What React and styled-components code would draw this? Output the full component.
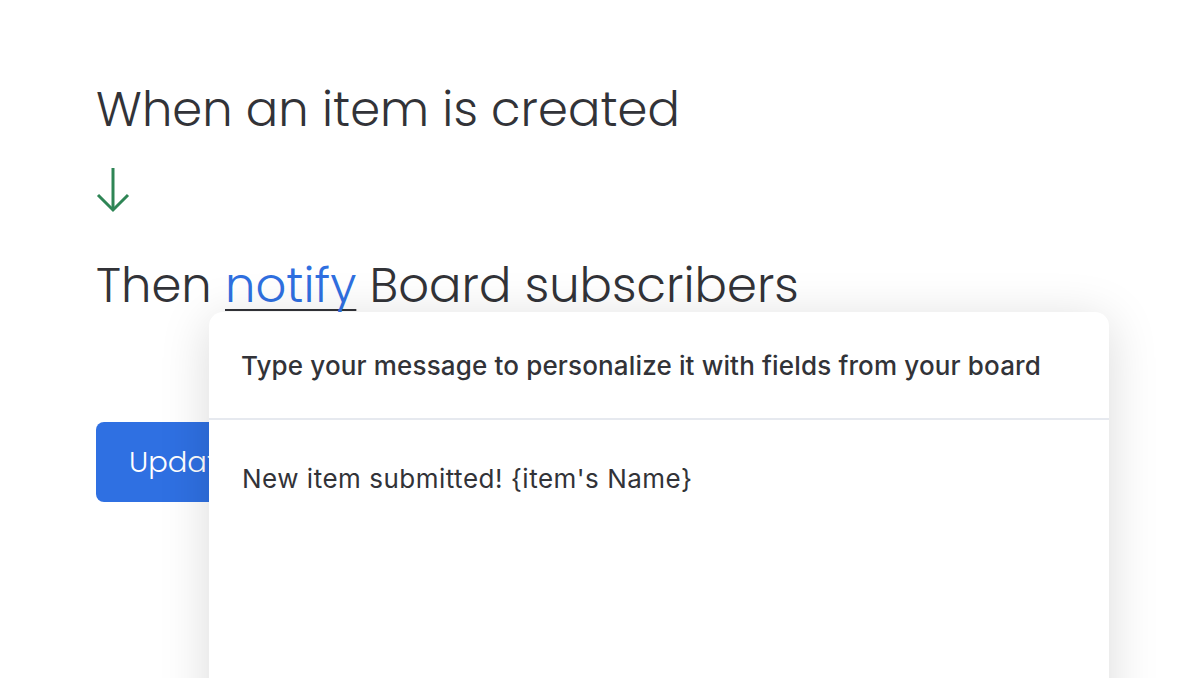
import React from "react";
import styled, { createGlobalStyle } from "styled-components";

const Global = createGlobalStyle`
  html, body { margin: 0; padding: 0; background: #ffffff; }
  body { font-family: "Inter", "Open Sans", sans-serif; color: #323338; overflow: hidden; }
`;

const Page = styled.div`
  position: relative;
  width: 1190px;
  height: 678px;
  overflow: hidden;
  background: #fff;
  padding: 78px 0 0 96px;
  box-sizing: border-box;
`;

const Sentence = styled.div`
  font-family: "Poppins", "Inter", sans-serif;
  font-size: 48px;
  font-weight: 300;
  line-height: 64px;
  color: #323338;
  letter-spacing: 0.05px;
  white-space: nowrap;
`;

const ArrowRow = styled.div`
  display: flex;
  height: 64px;
  margin: 24px 0 24px;
  align-items: flex-start;
`;

const Anchor = styled.span`
  position: relative;
  display: inline-block;
`;

const Link = styled.span`
  color: #2f6fe0;
  text-decoration: underline;
  text-decoration-color: #323338;
  text-decoration-thickness: 2px;
  text-underline-offset: 7px;
  text-decoration-skip-ink: none;
`;

const Button = styled.button`
  display: block;
  margin-top: 104px;
  width: 200px;
  height: 80px;
  border: none;
  border-radius: 8px;
  background: #2f70e2;
  color: #fff;
  font-family: "Poppins", "Inter", sans-serif;
  font-size: 29px;
  font-weight: 300;
  text-align: left;
  padding: 0 0 0 33px;
`;

const Popup = styled.div`
  position: absolute;
  left: -16px;
  top: 58px;
  width: 900px;
  height: 420px;
  background: #fff;
  border-radius: 14px;
  box-shadow: 0 8px 50px rgba(0, 0, 0, 0.15);
  white-space: normal;
`;

const PopupHeader = styled.div`
  font-family: "Inter", sans-serif;
  font-size: 26px;
  font-weight: 500;
  line-height: 32px;
  letter-spacing: 0.15px;
  color: #323338;
  padding: 38px 32px 36px;
  border-bottom: 2px solid #e6e9ef;
`;

const PopupBody = styled.div`
  font-family: "Inter", sans-serif;
  font-size: 26px;
  font-weight: 400;
  line-height: 32px;
  letter-spacing: 0.5px;
  color: #323338;
  padding: 43px 33px;
`;

const DownArrow = () => (
  <svg width="36" height="50" viewBox="0 0 36 50" fill="none">
    <path d="M17 2 V44" stroke="#2e8555" strokeWidth="3" />
    <path d="M2 29 L17 44 L32 29" stroke="#2e8555" strokeWidth="3" fill="none" />
  </svg>
);

export default function App() {
  return (
    <>
      <Global />
      <Page>
        <Sentence>When an item is created</Sentence>
        <ArrowRow>
          <DownArrow />
        </ArrowRow>
        <Sentence>
          Then{" "}
          <Anchor>
            <Link>notify</Link>
            <Popup>
              <PopupHeader>
                Type your message to personalize it with fields from your board
              </PopupHeader>
              <PopupBody>New item submitted! {"{item's Name}"}</PopupBody>
            </Popup>
          </Anchor>{" "}
          Board subscribers
        </Sentence>
        <Button>Update</Button>
      </Page>
    </>
  );
}
